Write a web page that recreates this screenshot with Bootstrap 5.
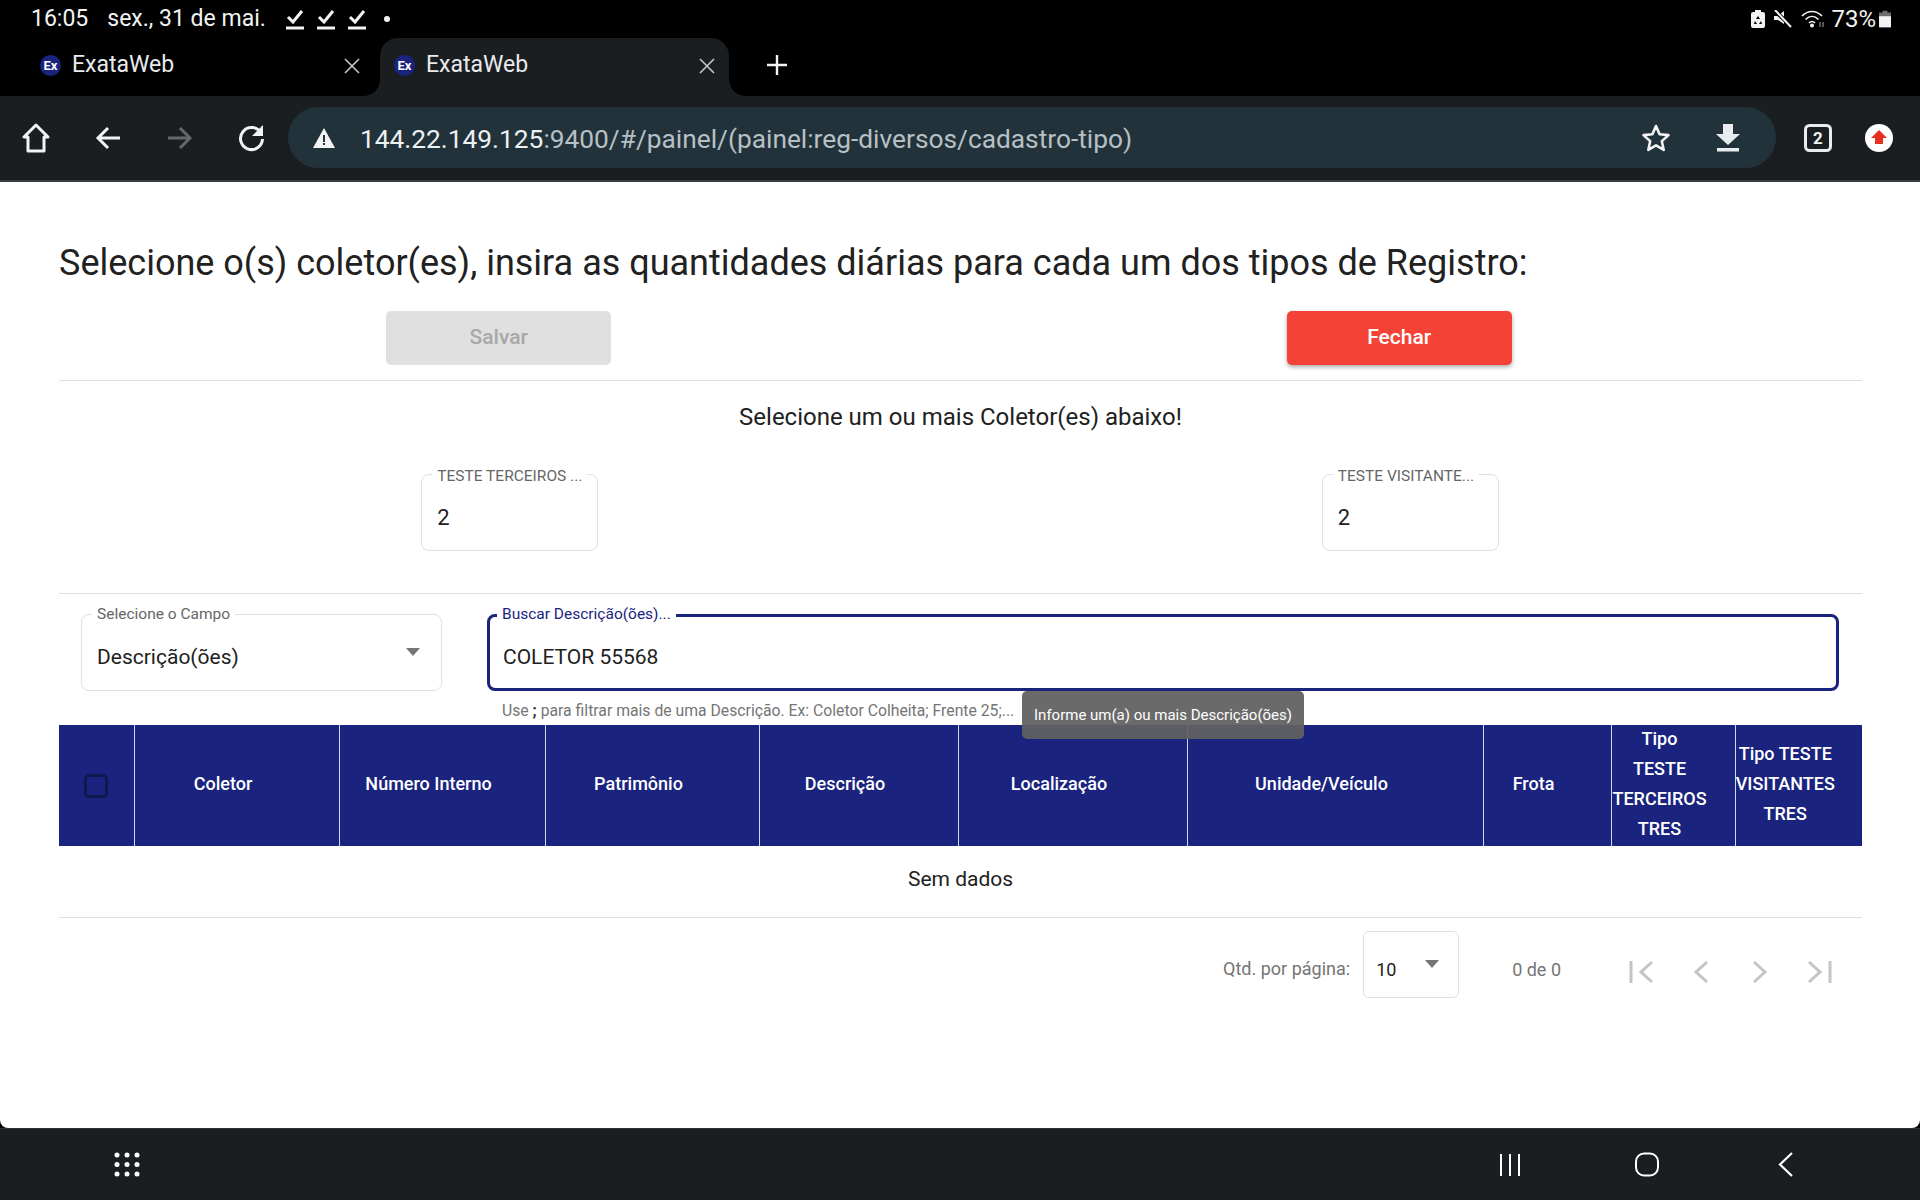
<!DOCTYPE html>
<html lang="pt-BR">
<head>
  <meta charset="UTF-8">
  <meta name="viewport" content="width=device-width, initial-scale=1.0">
  <title>ExataWeb</title>
  <link rel="stylesheet" href="https://cdn.jsdelivr.net/npm/bootstrap@5.3.0/dist/css/bootstrap.min.css" />
  <style>
    body {
      height: 1200px;
      overflow: hidden;
      background: #000;
      font-family: Roboto, "Liberation Sans", sans-serif;
    }
    /* android status bar */
    .status-bar {
      height: 38px;
      padding: 0 29px 0 31px;
      color: #f1f3f4;
      font-size: 23px;
    }
    .status-date { margin-left: 19px; margin-right: 19px; }
    .status-check { width: 20px; height: 22px; margin-right: 11px; }
    .status-dot { width: 6px; height: 6px; border-radius: 50%; background: #f1f3f4; margin-left: 6px; }
    .status-pct { font-size: 24px; margin: 0 3px 0 6px; }
    /* tab strip */
    .tab-strip { height: 58px; }
    .tab-item {
      position: relative;
      width: 348px;
      height: 58px;
      padding-bottom: 3px;
      padding-left: 40px;
      padding-right: 7px;
      color: #e8eaed;
      font-size: 23px;
      border-radius: 18px 18px 0 0;
    }
    .tab-item.is-active { background: #1a1e21; padding-left: 14px; padding-right: 13px; margin-left: 12px; width: 349px; }
    .tab-item.is-active::before, .tab-item.is-active::after {
      content: "";
      position: absolute;
      bottom: 0;
      width: 16px;
      height: 16px;
    }
    .tab-item.is-active::before { left: -16px; background: radial-gradient(circle at 0 0, transparent 15.500px, #1a1e21 16px); }
    .tab-item.is-active::after { right: -16px; background: radial-gradient(circle at 100% 0, transparent 15.500px, #1a1e21 16px); }
    .tab-strip .tab-item:first-child { width: 368px; padding-left: 40px; }
    .tab-fav {
      width: 21px;
      height: 21px;
      border-radius: 50%;
      background: #1a237e;
      color: #fff;
      font-size: 13px;
      font-weight: 700;
      line-height: 21px;
      text-align: center;
      margin-right: 11px;
      flex: none;
    }
    .tab-close { width: 16px; height: 16px; margin-left: auto; margin-right: 1px; }
    .tab-plus { width: 22px; height: 22px; margin-left: 37px; margin-bottom: 4px; }
    /* chrome toolbar */
    .tool-bar { height: 86px; background: #1a1e21; padding-bottom: 1px; border-bottom: 2px solid #3a3f43; }
    .tool-btn { width: 72px; flex: none; }
    .omni-box {
      width: 1488px;
      height: 61px;
      background: #22323a;
      border-radius: 31px;
      padding: 0 35px 0 24px;
      font-size: 26.300px;
      color: #b6c0c5;
      flex: none;
      white-space: nowrap;
    }
    .omni-url { padding-top: 4px; }
    .omni-host { color: #eef1f2; }
    .omni-warn { width: 24px; height: 22px; margin-right: 24px; flex: none; }
    .omni-star { width: 30px; height: 30px; margin-left: auto; }
    .omni-down { width: 26px; height: 28px; margin-left: 44px; }
    .tool-tabs { width: 28px; height: 28px; margin-left: 28px; }
    .tool-update { width: 28px; height: 28px; margin-left: 33px; }
    /* page */
    .page-area {
      height: 946px;
      background: #fff;
      padding: 0 58px 0 59px;
      border-radius: 0 0 8px 8px;
      color: #212121;
      flex: none;
    }
    .page-title { font-size: 36px; font-weight: 400; line-height: 44px; margin: 59px 0 26px; color: #212121; }
    .btn-row { padding-bottom: 15px; border-bottom: 1px solid #e0e0e0; }
    .btn-acao {
      width: 225px;
      height: 54px;
      margin-right: 24px;
      font-size: 21px;
      font-weight: 500;
      border: 0;
      border-radius: 5px;
    }
    .btn-salvar { margin-left: 1px; margin-right: 23px; }
    .btn-salvar:disabled { background: #e0e0e0; color: #a8a8a8; opacity: 1; }
    .btn-fechar { background: #f44336; color: #fff; box-shadow: 0 2px 4px rgba(0, 0, 0, .35); }
    .sub-title { font-size: 24px; line-height: 30px; text-align: center; margin: 21px 0 42px; }
    .qtd-row { padding-bottom: 42px; border-bottom: 1px solid #e0e0e0; }
    .out-field {
      position: relative;
      height: 77px;
      border: 1px solid #e0e0e0;
      border-radius: 8px;
      padding: 0 15px;
      background: #fff;
    }
    .out-field input, .out-field .field-val {
      display: block;
      width: 100%;
      border: 0;
      outline: 0;
      padding: 0;
      margin-top: 27px;
      height: 30px;
      line-height: 30px;
      font-size: 21px;
      color: #212121;
      background: transparent;
    }
    .out-label {
      position: absolute;
      top: -9px;
      left: 10px;
      padding: 0 5px;
      background: #fff;
      font-size: 15.500px;
      line-height: 20px;
      color: #666;
      white-space: nowrap;
    }
    .qtd-field { width: 177px; }
    .qtd-field input { font-size: 22px; margin-top: 28px; }
    .qtd-shift { margin-right: 2px; }
    .filter-row { padding: 20px 23px 0 22px; gap: 45px; }
    .select-field { width: 361px; flex: none; }
    .select-field .out-label { top: -11px; }
    .search-field { flex: 1; border: 3px solid #1a237e; padding: 0 13px; }
    .search-field input { margin-top: 25px; }
    .search-field .out-label { color: #1a237e; top: -13px; left: 7px; }
    .field-caret {
      position: absolute;
      right: 21px;
      top: 33px;
      width: 0;
      height: 0;
      border-left: 7px solid transparent;
      border-right: 7px solid transparent;
      border-top: 8px solid #757575;
    }
    .hint-line { font-size: 15.750px; line-height: 20px; color: #757575; padding-left: 443px; margin: 10px 0 4px; white-space: nowrap; }
    .hint-line b { color: #333; }
    .hint-tip {
      position: absolute;
      left: 1022px;
      top: 509px;
      width: 282px;
      height: 48px;
      background: rgba(97, 97, 97, .94);
      border-radius: 5px;
      color: #fff;
      font-size: 15px;
      line-height: 48px;
      text-align: center;
      z-index: 5;
      white-space: nowrap;
    }
    .grid-tipos { table-layout: fixed; width: 1803px; margin: 0; }
    .grid-tipos thead th {
      height: 121px;
      padding: 0 27px 0 0;
      background: #1a237e;
      color: #fff;
      font-size: 18px;
      font-weight: 500;
      line-height: 30px;
      text-align: center;
      vertical-align: middle;
      border-bottom: 0;
      border-right: 1px solid #d5d7e8;
    }
    .grid-tipos thead th:first-child { padding: 0 0 2px; }
    .grid-tipos thead th:last-child { border-right: 0; }
    .th-txt { display: block; margin-top: -4px; }
    .grid-tipos tbody td {
      height: 71px;
      padding: 0 0 4px;
      font-size: 21px;
      text-align: center;
      vertical-align: middle;
      color: #212121;
      border-bottom: 1px solid #e0e0e0;
    }
    .c-1 { width: 75px; } .c-2 { width: 205px; } .c-3 { width: 206px; } .c-4 { width: 214px; } .c-5 { width: 199px; }
    .c-6 { width: 229px; } .c-7 { width: 296px; } .c-8 { width: 128px; } .c-9 { width: 124px; } .c-10 { width: 127px; }
    .head-check {
      width: 24px;
      height: 24px;
      margin: 0;
      background: transparent;
      border: 3px solid #11174f;
      border-radius: 3px;
      vertical-align: middle;
    }
    .pager { padding: 13px 30px 0 0; height: 80px; font-size: 18px; color: #757575; }
    .pager-label { padding-top: 24px; }
    .pager-size { position: relative; width: 96px; height: 67px; border: 1px solid #e0e0e0; border-radius: 6px; padding: 26px 0 0 12px; margin: 0 53px 0 13px; color: #212121; font-size: 18px; line-height: 24px; }
    .pager-size .field-caret { top: 28px; right: 19px; }
    .pager-count { margin-right: 68px; padding-top: 25px; }
    .pager-ic { width: 26px; height: 26px; margin-right: 33px; margin-top: 28px; }
    .pager-ic:last-child { margin-right: 0; }
    /* android nav bar */
    .nav-keys { height: 72px; background: #1a1e21; border-top: 1px solid #2c3135; flex: none; }
    .nav-grid { width: 26px; height: 25px; margin-left: 114px; }
    .nav-recents { width: 22px; height: 24px; margin-left: auto; }
    .nav-home { width: 26px; height: 25px; margin-left: 113px; }
    .nav-back { width: 16px; height: 25px; margin-left: 118px; margin-right: 126px; }
  </style>
</head>
<body class="d-flex flex-column">
  <!-- STATUS BAR -->
  <div class="status-bar d-flex align-items-center">
    <span>16:05</span><span class="status-date">sex., 31 de mai.</span>
    <svg class="status-check" viewBox="0 0 20 22" fill="none" stroke="#f1f3f4"><path d="M3 9l5 5 9-11" stroke-width="3"/><path d="M1 20h18" stroke-width="3"/></svg>
    <svg class="status-check" viewBox="0 0 20 22" fill="none" stroke="#f1f3f4"><path d="M3 9l5 5 9-11" stroke-width="3"/><path d="M1 20h18" stroke-width="3"/></svg>
    <svg class="status-check" viewBox="0 0 20 22" fill="none" stroke="#f1f3f4"><path d="M3 9l5 5 9-11" stroke-width="3"/><path d="M1 20h18" stroke-width="3"/></svg>
    <span class="status-dot"></span>
    <svg class="ms-auto" width="14" height="18" viewBox="0 0 14 18"><path d="M4 0h6v2h2a2 2 0 0 1 2 2v12a2 2 0 0 1-2 2H2a2 2 0 0 1-2-2V4a2 2 0 0 1 2-2h2z" fill="#f1f3f4"/><path d="M7 6l2 3H5zM4 11l2 3H3zM10 11l1 3H8z" fill="#000"/></svg>
    <svg class="ms-2" width="20" height="18" viewBox="0 0 20 18" fill="#f1f3f4"><path d="M1 6h4l6-5v13l-6-4H1z"/><path d="M1 0l18 17" stroke="#000" stroke-width="4"/><path d="M2 0l16 17" stroke="#f1f3f4" stroke-width="2"/></svg>
    <svg class="ms-2" width="24" height="18" viewBox="0 0 24 18" fill="none" stroke="#f1f3f4" stroke-width="1.6"><path d="M1 6c6-6 14-6 20 0"/><path d="M4.500 9.500c4-4 9-4 13 0"/><path d="M8 13c2-2 4-2 6 0"/><circle cx="11" cy="15.500" r="1.200" fill="#f1f3f4"/><path d="M19 12v5M22 12v5" stroke="#8b8f92" stroke-width="1.200"/></svg>
    <span class="status-pct">73%</span>
    <svg width="12" height="18" viewBox="0 0 13 18"><path d="M4 0h5v2h4v16H0V2h4z" fill="#6b6e70"/><path d="M0 6h13v12H0z" fill="#f1f3f4"/></svg>
  </div>

  <!-- TABS -->
  <div class="tab-strip d-flex align-items-stretch">
    <div class="tab-item d-flex align-items-center">
      <span class="tab-fav">Ex</span><span>ExataWeb</span>
      <svg class="tab-close" viewBox="0 0 16 16" stroke="#c4c7c9" stroke-width="1.600"><path d="M1 1l14 14M15 1L1 15"/></svg>
    </div>
    <div class="tab-item is-active d-flex align-items-center">
      <span class="tab-fav">Ex</span><span>ExataWeb</span>
      <svg class="tab-close" viewBox="0 0 16 16" stroke="#c4c7c9" stroke-width="1.600"><path d="M1 1l14 14M15 1L1 15"/></svg>
    </div>
    <div class="d-flex align-items-center">
      <svg class="tab-plus" viewBox="0 0 22 22" stroke="#f1f3f4" stroke-width="2.400"><path d="M11 1v20M1 11h20"/></svg>
    </div>
  </div>

  <!-- TOOLBAR -->
  <div class="tool-bar d-flex align-items-center">
    <div class="tool-btn text-center"><svg width="28" height="30" viewBox="0 0 28 30" fill="none" stroke="#f1f3f4" stroke-width="3" stroke-linejoin="round"><path d="M14 2L2 14h4v14h16V14h4z"/></svg></div>
    <div class="tool-btn text-center"><svg width="26" height="24" viewBox="0 0 26 24" fill="none" stroke="#f1f3f4" stroke-width="3"><path d="M13 2L3 12l10 10M3 12h22"/></svg></div>
    <div class="tool-btn text-center"><svg width="26" height="24" viewBox="0 0 26 24" fill="none" stroke="#63686b" stroke-width="3"><path d="M13 2l10 10-10 10M23 12H1"/></svg></div>
    <div class="tool-btn text-center"><svg width="28" height="28" viewBox="0 0 28 28" fill="none"><path d="M23 9a11 11 0 1 0 1.500 6" stroke="#f1f3f4" stroke-width="3"/><path d="M25 1v11H14z" fill="#f1f3f4"/></svg></div>
    <div class="omni-box d-flex align-items-center">
      <svg class="omni-warn" viewBox="0 0 24 22"><path d="M12 1l11 20H1z" fill="#f1f3f4"/><path d="M11 8h2v7h-2zM11 16h2v2h-2z" fill="#22323a"/></svg>
      <span class="omni-url"><span class="omni-host">144.22.149.125</span>:9400/#/painel/(painel:reg-diversos/cadastro-tipo)</span>
      <svg class="omni-star" viewBox="0 0 30 30" fill="none" stroke="#f1f3f4" stroke-width="2.600" stroke-linejoin="round"><path d="M15 3l3.600 8.200 8.900.9-6.700 6 1.900 8.800L15 22.400 7.300 26.900l1.900-8.800-6.700-6 8.900-.9z"/></svg>
      <svg class="omni-down" viewBox="0 0 26 28" fill="#e8ecee"><path d="M8 0h10v10h7L13 21 1 10h7z"/><path d="M2 24h22v3.500H2z"/></svg>
    </div>
    <svg class="tool-tabs" viewBox="0 0 28 28" fill="none"><rect x="1.500" y="1.500" width="25" height="25" rx="4" stroke="#e8ecee" stroke-width="3"/><text x="14" y="20" text-anchor="middle" fill="#f1f3f4" font-size="17" font-weight="700" font-family="Roboto, sans-serif">2</text></svg>
    <svg class="tool-update" viewBox="0 0 28 28"><circle cx="14" cy="14" r="14" fill="#fff"/><path d="M14 6l8 8h-4v6h-8v-6H6z" fill="#e3301f"/></svg>
  </div>

  <!-- PAGE -->
  <main class="page-area position-relative">
    <h1 class="page-title">Selecione o(s) coletor(es), insira as quantidades diárias para cada um dos tipos de Registro:</h1>

    <div class="row g-0 btn-row">
      <div class="col-6 text-center"><button class="btn btn-acao btn-salvar" disabled>Salvar</button></div>
      <div class="col-6 text-center"><button class="btn btn-acao btn-fechar">Fechar</button></div>
    </div>

    <p class="sub-title">Selecione um ou mais Coletor(es) abaixo!</p>

    <div class="row g-0 qtd-row">
      <div class="col-6 d-flex justify-content-center">
        <div class="out-field qtd-field">
          <span class="out-label">TESTE TERCEIROS ...</span>
          <input type="text" value="2" aria-label="TESTE TERCEIROS TRES">
        </div>
      </div>
      <div class="col-6 d-flex justify-content-center">
        <div class="out-field qtd-field qtd-shift">
          <span class="out-label">TESTE VISITANTE...</span>
          <input type="text" value="2" aria-label="TESTE VISITANTES TRES">
        </div>
      </div>
    </div>

    <div class="d-flex filter-row">
      <div class="out-field select-field">
        <span class="out-label">Selecione o Campo</span>
        <div class="field-val">Descrição(ões)</div>
        <span class="field-caret"></span>
      </div>
      <div class="out-field search-field">
        <span class="out-label">Buscar Descrição(ões)...</span>
        <input type="text" value="COLETOR 55568" aria-label="Buscar Descrição(ões)">
      </div>
    </div>
    <div class="hint-line">Use <b>;</b> para filtrar mais de uma Descrição. Ex: Coletor Colheita; Frente 25;...</div>
    <div class="hint-tip">Informe um(a) ou mais Descrição(ões)</div>

    <table class="table grid-tipos">
      <colgroup>
        <col class="c-1"><col class="c-2"><col class="c-3"><col class="c-4"><col class="c-5">
        <col class="c-6"><col class="c-7"><col class="c-8"><col class="c-9"><col class="c-10">
      </colgroup>
      <thead>
        <tr>
          <th><input class="form-check-input head-check" type="checkbox" aria-label="Selecionar todos"></th>
          <th><span class="th-txt">Coletor</span></th>
          <th><span class="th-txt">Número Interno</span></th>
          <th><span class="th-txt">Patrimônio</span></th>
          <th><span class="th-txt">Descrição</span></th>
          <th><span class="th-txt">Localização</span></th>
          <th><span class="th-txt">Unidade/Veículo</span></th>
          <th><span class="th-txt">Frota</span></th>
          <th><span class="th-txt">Tipo<br>TESTE<br>TERCEIROS<br>TRES</span></th>
          <th><span class="th-txt">Tipo TESTE<br>VISITANTES<br>TRES</span></th>
        </tr>
      </thead>
      <tbody>
        <tr><td colspan="10">Sem dados</td></tr>
      </tbody>
    </table>

    <div class="pager d-flex justify-content-end align-items-start">
      <span class="pager-label">Qtd. por página:</span>
      <div class="pager-size">10<span class="field-caret"></span></div>
      <span class="pager-count">0 de 0</span>
      <svg class="pager-ic" viewBox="0 0 26 26" fill="none" stroke="#c4c4c4" stroke-width="3"><path d="M2 2v22M23 3L12 13l11 10"/></svg>
      <svg class="pager-ic" viewBox="0 0 26 26" fill="none" stroke="#c4c4c4" stroke-width="3"><path d="M19 3L8 13l11 10"/></svg>
      <svg class="pager-ic" viewBox="0 0 26 26" fill="none" stroke="#c4c4c4" stroke-width="3"><path d="M7 3l11 10L7 23"/></svg>
      <svg class="pager-ic" viewBox="0 0 26 26" fill="none" stroke="#c4c4c4" stroke-width="3"><path d="M24 2v22M3 3l11 10L3 23"/></svg>
    </div>
  </main>

  <!-- NAV KEYS -->
  <div class="nav-keys d-flex align-items-center">
    <svg class="nav-grid" viewBox="0 0 26 25" fill="#fff">
      <circle cx="3" cy="3" r="2.500"/><circle cx="13" cy="3" r="2.500"/><circle cx="23" cy="3" r="2.500"/>
      <circle cx="3" cy="12.500" r="2.500"/><circle cx="13" cy="12.500" r="2.500"/><circle cx="23" cy="12.500" r="2.500"/>
      <circle cx="3" cy="22" r="2.500"/><circle cx="13" cy="22" r="2.500"/><circle cx="23" cy="22" r="2.500"/>
    </svg>
    <svg class="nav-recents" viewBox="0 0 22 24" stroke="#fff" stroke-width="2"><path d="M2 1v22M11 1v22M20 1v22"/></svg>
    <svg class="nav-home" viewBox="0 0 26 25" fill="none" stroke="#fff" stroke-width="2"><rect x="2" y="1.500" width="22" height="22" rx="8"/></svg>
    <svg class="nav-back" viewBox="0 0 16 25" fill="none" stroke="#fff" stroke-width="2.200"><path d="M14 1L2 12.500 14 24"/></svg>
  </div>
</body>
</html>
